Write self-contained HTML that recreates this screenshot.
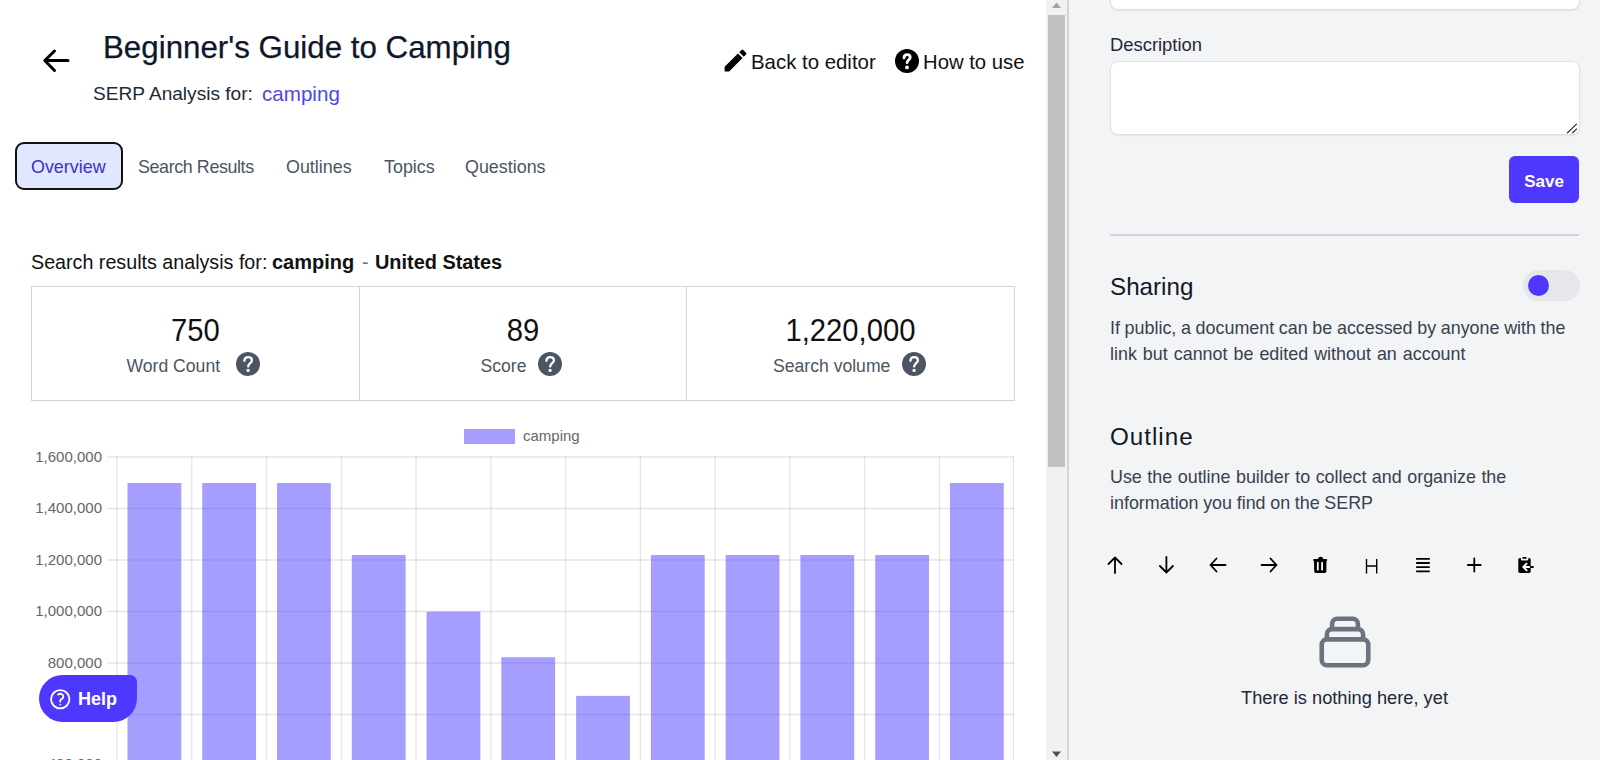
<!DOCTYPE html>
<html><head><meta charset="utf-8">
<style>
*{box-sizing:border-box;margin:0;padding:0}
html,body{width:1600px;height:760px;overflow:hidden;background:#fff;font-family:"Liberation Sans",sans-serif;}
svg text{font-family:"Liberation Sans",sans-serif}
.a{position:absolute;white-space:nowrap;}
#left{position:absolute;left:0;top:0;width:1046px;height:760px;background:#fff;overflow:hidden}
#track{position:absolute;left:1046px;top:0;width:21px;height:760px;background:#f1f1f1}
#thumb{position:absolute;left:1048px;top:15px;width:17px;height:452px;background:#c1c1c1}
#sep{position:absolute;left:1067px;top:0;width:2px;height:760px;background:#d1d5db}
#right{position:absolute;left:1069px;top:0;width:531px;height:760px;background:#f3f4f6}
.tab{position:absolute;top:147px;font-size:17.9px;color:#4b5563;line-height:40px}
.box{position:absolute;top:286px;height:115px;border:1px solid #d1d5db;background:#fff}
.num{position:absolute;top:313px;text-align:center;font-size:31.6px;line-height:34px;color:#111;transform:scaleX(0.925)}
.lbl{position:absolute;top:352.5px;font-size:17.6px;color:#4b5563;line-height:26px}
</style></head>
<body>
<div id="left">
  <svg class="a" style="left:40px;top:45px" width="32" height="32" viewBox="0 0 32 32"><path d="M28 15.5H5.5M14.5 6L4.8 15.5L14.5 25.5" fill="none" stroke="#000" stroke-width="3" stroke-linecap="round" stroke-linejoin="round"/></svg>
  <div class="a" style="left:103px;top:28px;font-size:31.3px;line-height:40px;color:#0f172a;-webkit-text-stroke:0.25px #0f172a">Beginner's Guide to Camping</div>
  <div class="a" style="left:93px;top:81px;font-size:19.1px;line-height:26px;color:#1f2937">SERP Analysis for:</div>
  <div class="a" style="left:262px;top:81px;font-size:20.6px;line-height:26px;color:#4f46e5">camping</div>

  <svg class="a" style="left:720.5px;top:46px" width="29" height="29" viewBox="0 0 24 24"><path d="M3 17.25V21h3.75L17.81 9.94l-3.75-3.75L3 17.25zM20.71 7.04a1 1 0 000-1.41l-2.34-2.34a1 1 0 00-1.41 0l-1.83 1.83 3.75 3.75 1.83-1.83z" fill="#000"/></svg>
  <div class="a" style="left:751px;top:48px;font-size:20.4px;line-height:28px;color:#111">Back to editor</div>
  <svg class="a" style="left:895.4px;top:48.5px" width="24" height="24" viewBox="0 0 24 24"><circle cx="12" cy="12" r="12" fill="#000"/><path d="M9 8.9C9 6.5 10.4 5.6 12.1 5.6C13.9 5.6 15.2 6.6 15.2 8.4C15.2 10.6 12.1 11 12.1 13.7" fill="none" stroke="#fff" stroke-width="2.8" stroke-linecap="round"/><circle cx="12" cy="18.4" r="1.9" fill="#fff"/></svg>
  <div class="a" style="left:923px;top:48px;font-size:20.3px;line-height:28px;color:#111">How to use</div>

  <div class="a" style="left:15px;top:142px;width:108px;height:48px;border:2px solid #111;border-radius:9px;background:#e0e7ff"></div>
  <div class="tab" style="left:31px;color:#3b30d0">Overview</div>
  <div class="tab" style="left:138px;letter-spacing:-0.4px">Search Results</div>
  <div class="tab" style="left:286px">Outlines</div>
  <div class="tab" style="left:384px">Topics</div>
  <div class="tab" style="left:465px">Questions</div>

  <div class="a" style="left:31px;top:249px;font-size:19.7px;line-height:26px;color:#111">Search results analysis for:</div>
  <div class="a" style="left:272px;top:249px;font-size:20px;line-height:26px;color:#111;font-weight:bold">camping</div>
  <div class="a" style="left:362px;top:249px;font-size:19.7px;line-height:26px;color:#6b7280">-</div>
  <div class="a" style="left:375px;top:249px;font-size:19.9px;line-height:26px;color:#111;font-weight:bold">United States</div>

  <div class="box" style="left:31px;width:329px"></div>
  <div class="box" style="left:359px;width:328px"></div>
  <div class="box" style="left:686px;width:329px"></div>
  <div class="num" style="left:31px;width:329px">750</div>
  <div class="num" style="left:359px;width:328px">89</div>
  <div class="num" style="left:686px;width:329px">1,220,000</div>
  <div class="lbl" style="left:126.5px">Word Count</div>
  <svg class="a" style="left:236px;top:352px" width="24" height="24" viewBox="0 0 24 24"><circle cx="12" cy="12" r="12" fill="#4b5563"/><path d="M8.4 8.9C8.5 6.5 10.1 5.2 12.2 5.2C14.4 5.2 15.9 6.5 15.9 8.5C15.9 11 12.4 11.4 12.2 14.3" fill="none" stroke="#fff" stroke-width="2.3" stroke-linecap="round"/><circle cx="12.1" cy="18.4" r="1.6" fill="#fff"/></svg>
  <div class="lbl" style="left:480.5px">Score</div>
  <svg class="a" style="left:538px;top:352px" width="24" height="24" viewBox="0 0 24 24"><circle cx="12" cy="12" r="12" fill="#4b5563"/><path d="M8.4 8.9C8.5 6.5 10.1 5.2 12.2 5.2C14.4 5.2 15.9 6.5 15.9 8.5C15.9 11 12.4 11.4 12.2 14.3" fill="none" stroke="#fff" stroke-width="2.3" stroke-linecap="round"/><circle cx="12.1" cy="18.4" r="1.6" fill="#fff"/></svg>
  <div class="lbl" style="left:773px">Search volume</div>
  <svg class="a" style="left:902px;top:352px" width="24" height="24" viewBox="0 0 24 24"><circle cx="12" cy="12" r="12" fill="#4b5563"/><path d="M8.4 8.9C8.5 6.5 10.1 5.2 12.2 5.2C14.4 5.2 15.9 6.5 15.9 8.5C15.9 11 12.4 11.4 12.2 14.3" fill="none" stroke="#fff" stroke-width="2.3" stroke-linecap="round"/><circle cx="12.1" cy="18.4" r="1.6" fill="#fff"/></svg>

  <svg class="a" style="left:0;top:410px" width="1046" height="350" viewBox="0 410 1046 350">
<line x1="107" y1="457.00" x2="1013.6" y2="457.00" stroke="rgba(0,0,0,0.1)" stroke-width="1.3"/>
<line x1="107" y1="508.50" x2="1013.6" y2="508.50" stroke="rgba(0,0,0,0.1)" stroke-width="1.3"/>
<line x1="107" y1="560.00" x2="1013.6" y2="560.00" stroke="rgba(0,0,0,0.1)" stroke-width="1.3"/>
<line x1="107" y1="611.50" x2="1013.6" y2="611.50" stroke="rgba(0,0,0,0.1)" stroke-width="1.3"/>
<line x1="107" y1="663.00" x2="1013.6" y2="663.00" stroke="rgba(0,0,0,0.1)" stroke-width="1.3"/>
<line x1="107" y1="714.50" x2="1013.6" y2="714.50" stroke="rgba(0,0,0,0.1)" stroke-width="1.3"/>
<line x1="107" y1="766.00" x2="1013.6" y2="766.00" stroke="rgba(0,0,0,0.1)" stroke-width="1.3"/>
<line x1="117.00" y1="456.35" x2="117.00" y2="770" stroke="rgba(0,0,0,0.1)" stroke-width="1.3"/>
<line x1="191.77" y1="456.35" x2="191.77" y2="770" stroke="rgba(0,0,0,0.1)" stroke-width="1.3"/>
<line x1="266.54" y1="456.35" x2="266.54" y2="770" stroke="rgba(0,0,0,0.1)" stroke-width="1.3"/>
<line x1="341.31" y1="456.35" x2="341.31" y2="770" stroke="rgba(0,0,0,0.1)" stroke-width="1.3"/>
<line x1="416.08" y1="456.35" x2="416.08" y2="770" stroke="rgba(0,0,0,0.1)" stroke-width="1.3"/>
<line x1="490.85" y1="456.35" x2="490.85" y2="770" stroke="rgba(0,0,0,0.1)" stroke-width="1.3"/>
<line x1="565.62" y1="456.35" x2="565.62" y2="770" stroke="rgba(0,0,0,0.1)" stroke-width="1.3"/>
<line x1="640.39" y1="456.35" x2="640.39" y2="770" stroke="rgba(0,0,0,0.1)" stroke-width="1.3"/>
<line x1="715.16" y1="456.35" x2="715.16" y2="770" stroke="rgba(0,0,0,0.1)" stroke-width="1.3"/>
<line x1="789.93" y1="456.35" x2="789.93" y2="770" stroke="rgba(0,0,0,0.1)" stroke-width="1.3"/>
<line x1="864.70" y1="456.35" x2="864.70" y2="770" stroke="rgba(0,0,0,0.1)" stroke-width="1.3"/>
<line x1="939.47" y1="456.35" x2="939.47" y2="770" stroke="rgba(0,0,0,0.1)" stroke-width="1.3"/>
<line x1="1013.40" y1="456.35" x2="1013.40" y2="770" stroke="rgba(0,0,0,0.1)" stroke-width="1.3"/>
<rect x="127.48" y="483.00" width="53.8" height="297.0" fill="rgba(77,61,255,0.5)"/>
<rect x="202.25" y="483.00" width="53.8" height="297.0" fill="rgba(77,61,255,0.5)"/>
<rect x="277.02" y="483.00" width="53.8" height="297.0" fill="rgba(77,61,255,0.5)"/>
<rect x="351.80" y="555.00" width="53.8" height="225.0" fill="rgba(77,61,255,0.5)"/>
<rect x="426.56" y="611.60" width="53.8" height="168.4" fill="rgba(77,61,255,0.5)"/>
<rect x="501.33" y="657.20" width="53.8" height="122.8" fill="rgba(77,61,255,0.5)"/>
<rect x="576.11" y="695.90" width="53.8" height="84.1" fill="rgba(77,61,255,0.5)"/>
<rect x="650.88" y="555.00" width="53.8" height="225.0" fill="rgba(77,61,255,0.5)"/>
<rect x="725.64" y="555.00" width="53.8" height="225.0" fill="rgba(77,61,255,0.5)"/>
<rect x="800.41" y="555.00" width="53.8" height="225.0" fill="rgba(77,61,255,0.5)"/>
<rect x="875.18" y="555.00" width="53.8" height="225.0" fill="rgba(77,61,255,0.5)"/>
<rect x="949.95" y="483.00" width="53.8" height="297.0" fill="rgba(77,61,255,0.5)"/>
<text x="102" y="461.6" text-anchor="end" font-size="15" fill="#666">1,600,000</text>
<text x="102" y="513.1" text-anchor="end" font-size="15" fill="#666">1,400,000</text>
<text x="102" y="564.6" text-anchor="end" font-size="15" fill="#666">1,200,000</text>
<text x="102" y="616.1" text-anchor="end" font-size="15" fill="#666">1,000,000</text>
<text x="102" y="667.6" text-anchor="end" font-size="15" fill="#666">800,000</text>
<text x="102" y="719.1" text-anchor="end" font-size="15" fill="#666">600,000</text>
<text x="102" y="769.4" text-anchor="end" font-size="15" fill="#666">400,000</text>
<rect x="464" y="429" width="51" height="15" fill="rgba(77,61,255,0.5)"/>
<text x="523" y="441" font-size="15" fill="#666">camping</text>
  </svg>

  <div class="a" style="left:39px;top:675px;width:98px;height:47px;background:#4f38fd;border-radius:24px 7px 24px 24px"></div>
  <svg class="a" style="left:48.05px;top:687.05px" width="24.5" height="24.5" viewBox="0 0 24 24" fill="none" stroke="#fff" stroke-width="1.75" stroke-linecap="round" stroke-linejoin="round"><path d="M9.879 7.519c1.171-1.025 3.071-1.025 4.242 0 1.172 1.025 1.172 2.687 0 3.712-.203.179-.43.326-.67.442-.745.361-1.450.999-1.450 1.827v.75M21 12a9 9 0 1 1-18 0 9 9 0 0 1 18 0Zm-9 5.25h.008v.008H12v-.008Z"/></svg>
  <div class="a" style="left:78px;top:687.3px;font-size:18px;line-height:24px;color:#fff;font-weight:bold">Help</div>
</div>
<div id="track"></div>
<div id="thumb"></div>
<svg class="a" style="left:1046px;top:0" width="21" height="12"><path d="M6 8L10.5 2.5L15 8Z" fill="#a3a3a3"/></svg>
<svg class="a" style="left:1046px;top:748px" width="21" height="12"><path d="M6 3.5L15 3.5L10.5 9Z" fill="#505050"/></svg>
<div id="sep"></div>
<div id="right"></div>
<div class="a" style="left:1110px;top:-40px;width:470px;height:50px;background:#fff;border:1px solid #dde0e5;border-radius:8px;box-shadow:0 1px 2px rgba(0,0,0,0.07)"></div>
<div class="a" style="left:1110px;top:34px;font-size:18.4px;line-height:22px;color:#1e293b">Description</div>
<div class="a" style="left:1110px;top:61px;width:470px;height:74px;background:#fff;border:1px solid #dde0e5;border-radius:8px;box-shadow:0 1px 2px rgba(0,0,0,0.07)"></div>
<svg class="a" style="left:1564px;top:120.5px" width="14" height="14" viewBox="0 0 14 14"><path d="M3.5 11.8L12.5 3.1M8.6 11.8L12.6 8.1" stroke="#3a3a3a" stroke-width="1.3" stroke-linecap="round"/></svg>
<div class="a" style="left:1509px;top:156px;width:70px;height:47px;background:#4f38fd;border-radius:6px"></div>
<div class="a" style="left:1509px;top:169.5px;width:70px;text-align:center;font-size:17px;line-height:24px;color:#fff;font-weight:bold">Save</div>
<div class="a" style="left:1110px;top:234px;width:469px;height:2px;background:#d1d5db"></div>

<div class="a" style="left:1110px;top:273.3px;font-size:24.2px;line-height:28px;color:#111827">Sharing</div>
<div class="a" style="left:1523px;top:270px;width:57px;height:31px;background:#e5e7eb;border-radius:16px"></div>
<div class="a" style="left:1528px;top:275px;width:21px;height:21px;background:#4f38fd;border-radius:50%"></div>
<div class="a" style="left:1110px;top:316.2px;font-size:17.9px;line-height:25.8px;color:#374151;word-spacing:-0.3px">If public, a document can be accessed by anyone with the</div>
<div class="a" style="left:1110px;top:342px;font-size:17.9px;line-height:25.8px;color:#374151;word-spacing:1.05px">link but cannot be edited without an account</div>

<div class="a" style="left:1110px;top:422.5px;font-size:24.2px;line-height:28px;color:#111827;letter-spacing:1px">Outline</div>
<div class="a" style="left:1110px;top:465px;font-size:17.9px;line-height:25.8px;color:#374151;word-spacing:0.55px">Use the outline builder to collect and organize the</div>
<div class="a" style="left:1110px;top:490.8px;font-size:17.9px;line-height:25.8px;color:#374151;word-spacing:-0.3px">information you find on the SERP</div>

<svg class="a" style="left:1100px;top:550px" width="440" height="30" viewBox="1100 550 440 30" fill="none" stroke="#000" stroke-linecap="round" stroke-linejoin="round">
  <path d="M1115 573V557.5M1108.5 564L1115 557.5L1121.5 564" stroke-width="1.8"/>
  <path d="M1166.4 557V572.5M1159.9 566L1166.4 572.5L1172.9 566" stroke-width="1.8"/>
  <path d="M1225.5 565H1210.5M1216.5 558.5L1210.5 565L1216.5 571.5" stroke-width="1.8"/>
  <path d="M1261.5 565H1276.5M1270.5 558.5L1276.5 565L1270.5 571.5" stroke-width="1.8"/>
  <path d="M1416.8 558.9H1429.1M1416.8 563H1429.1M1416.8 567.1H1429.1M1416.8 571.3H1429.1" stroke-width="1.8"/>
  <path d="M1474.3 558.5V571.6M1467.9 565H1480.7" stroke-width="1.8"/>
  <path d="M1366.5 559V573.5M1376.7 559V573.5M1366.5 566H1376.7" stroke-width="1.4" stroke-linecap="butt"/>
</svg>
<svg class="a" style="left:1305px;top:550px" width="30" height="30" viewBox="0 0 30 30">
  <path d="M9 11H21.5L21.3 21.5Q21.2 22.9 19.8 22.9H10.7Q9.3 22.9 9.2 21.5Z" fill="#000"/>
  <rect x="8.1" y="8.9" width="14.2" height="2.2" rx="1.1" fill="#000"/>
  <path d="M13 9.5Q13 6.7 15.6 6.7Q18.2 6.7 18.2 9.5Z" fill="#000"/>
  <rect x="11.9" y="11.8" width="1.8" height="8.8" rx="0.9" fill="#fff"/>
  <rect x="16.2" y="11.8" width="1.8" height="8.8" rx="0.9" fill="#fff"/>
</svg>
<svg class="a" style="left:1510px;top:550px" width="30" height="30" viewBox="0 0 30 30">
  <rect x="8.3" y="8" width="12.4" height="14.9" rx="1.6" fill="#000"/>
  <rect x="10.8" y="5.5" width="7.6" height="5" rx="1.6" fill="#f3f4f6"/>
  <rect x="12.4" y="7" width="4.2" height="1.8" rx="0.6" fill="#000"/>
  <path d="M16.6 13.6L13.3 17L16.6 20.4M13.5 17H20.7" fill="none" stroke="#fff" stroke-width="1.9" stroke-linecap="round" stroke-linejoin="round"/>
  <path d="M20.7 17H22.9" fill="none" stroke="#000" stroke-width="1.9" stroke-linecap="round"/>
</svg>
<svg class="a" style="left:1314.2px;top:610.85px" width="62" height="62" viewBox="0 0 24 24" fill="none" stroke="#6b7280" stroke-width="1.78" stroke-linecap="round" stroke-linejoin="round"><path d="M19 11H5m14 0a2 2 0 012 2v6a2 2 0 01-2 2H5a2 2 0 01-2-2v-6a2 2 0 012-2m14 0V9a2 2 0 00-2-2M5 11V9a2 2 0 012-2m0 0V5a2 2 0 012-2h6a2 2 0 012 2v2M7 7h10"/></svg>
<div class="a" style="left:1241px;top:685.5px;font-size:18.26px;line-height:24px;color:#1f2937">There is nothing here, yet</div>
</body></html>
